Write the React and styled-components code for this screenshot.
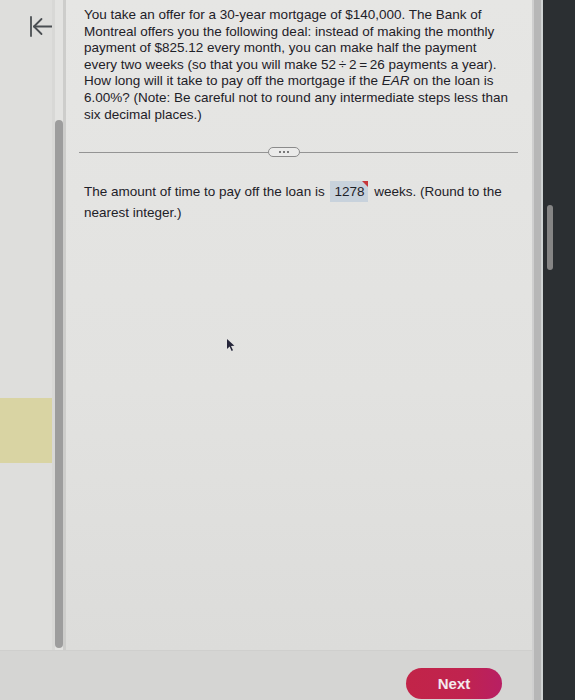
import React from 'react';
import styled, { createGlobalStyle } from 'styled-components';

const GlobalStyle = createGlobalStyle`
  html, body {
    margin: 0;
    padding: 0;
    background: #2c3033;
    overflow: hidden;
  }
`;

const BackIcon = () => (
  <svg width="26" height="22" viewBox="0 0 26 22" fill="none" stroke="#4a4e52" strokeWidth="1.8" strokeLinecap="round">
    <line x1="3" y1="1" x2="3" y2="20" />
    <line x1="6" y1="10.5" x2="25" y2="10.5" />
    <polyline points="13.5,3 6,10.5 13.5,18" strokeLinejoin="round" />
  </svg>
);

const Cursor = () => (
  <svg width="9" height="14" viewBox="0 0 9 14">
    <path d="M1 1 L1 11 L3.6 8.6 L5.6 13 L7 12.3 L5 8 L8.4 7.8 Z" fill="#25263a" />
  </svg>
);

const App = () => {
  return (
    <>
      <GlobalStyle />
      <Screen>
        <Window>
          <Body>
            <Sidebar>
              <BackButton>
                <BackIcon />
              </BackButton>
              <Highlight />
            </Sidebar>
            <Track>
              <Bar />
            </Track>
            <Content>
              <Question>
                You take an offer for a 30-year mortgage of $140,000. The Bank of<br />
                Montreal offers you the following deal: instead of making the monthly<br />
                payment of $825.12 every month, you can make half the payment<br />
                every two weeks (so that you will make 52{'\u2009'}÷{'\u2009'}2{'\u2009'}={'\u2009'}26 payments a year).<br />
                How long will it take to pay off the mortgage if the <em>EAR</em> on the loan is<br />
                6.00%? (Note: Be careful not to round any intermediate steps less than<br />
                six decimal places.)
              </Question>
              <Divider>
                <Rule $fixed />
                <Pill>
                  <Dot /><Dot /><Dot />
                </Pill>
                <Rule />
              </Divider>
              <Answer>
                The amount of time to pay off the loan is <Field>1278<Flag /></Field> weeks. (Round to the<br />
                nearest integer.)
              </Answer>
              <Pointer>
                <Cursor />
              </Pointer>
            </Content>
          </Body>
          <Footer>
            <NextButton>Next</NextButton>
          </Footer>
        </Window>
        <Edge />
        <Backdrop>
          <Thumb />
        </Backdrop>
      </Screen>
    </>
  );
};

const Screen = styled.div`
  display: flex;
  width: 575px;
  height: 700px;
  font-family: "Liberation Sans", Arial, sans-serif;
`;

const Window = styled.div`
  width: 532px;
  display: flex;
  flex-direction: column;
  background: #e3e3e1;
`;

const Body = styled.div`
  flex: 1;
  display: flex;
  min-height: 0;
`;

const Sidebar = styled.div`
  width: 52px;
  background: #dededc;
  display: flex;
  flex-direction: column;
`;

const BackButton = styled.div`
  padding: 16px 0 0 28px;
  height: 22px;
`;

const Highlight = styled.div`
  margin-top: 360px;
  height: 65px;
  background: #d9d4a3;
`;

const Track = styled.div`
  width: 14px;
  background: linear-gradient(90deg, #d8d8d6 0 3px, transparent 3px 11px, #cdcdcb 11px);
  padding: 120px 0 2px 3px;
  box-sizing: border-box;
`;

const Bar = styled.div`
  width: 8px;
  height: 528px;
  border-radius: 4px;
  background: #9d9d9d;
`;

const Content = styled.div`
  flex: 1;
  position: relative;
  padding: 7px 14px 0 13px;
  color: #1e2128;
  background: linear-gradient(180deg, #e6e6e4 0%, #e2e2e0 60%, #dcdcda 100%);
`;

const Question = styled.p`
  margin: 0 0 0 5px;
  font-size: 13.5px;
  line-height: 16.6px;
  white-space: nowrap;
`;

const Divider = styled.div`
  display: flex;
  align-items: center;
  margin-top: 24px;
  height: 10px;
`;

const Rule = styled.div`
  height: 1px;
  background: #949494;
  ${(p) => (p.$fixed ? 'width: 189px;' : 'flex: 1;')}
`;

const Pill = styled.div`
  width: 30px;
  height: 8px;
  border: 1px solid #8b8b8b;
  border-radius: 5px;
  background: #ebebea;
  display: flex;
  align-items: center;
  justify-content: center;
  gap: 2px;
`;

const Dot = styled.span`
  width: 2px;
  height: 2px;
  border-radius: 50%;
  background: #555;
`;

const Answer = styled.p`
  margin: 24px 0 0 5px;
  font-size: 13.5px;
  line-height: 20.5px;
  white-space: nowrap;
`;

const Field = styled.span`
  position: relative;
  display: inline-block;
  padding: 0 4px;
  height: 21px;
  line-height: 21px;
  background: #c8d2dc;
  margin: 0 2px;
`;

const Flag = styled.span`
  position: absolute;
  top: 0;
  right: 0;
  width: 0;
  height: 0;
  border-top: 6px solid #c6373b;
  border-left: 6px solid transparent;
`;

const Pointer = styled.div`
  position: absolute;
  left: 160px;
  top: 338px;
`;

const Footer = styled.div`
  height: 50px;
  background: #d5d5d3;
  border-top: 1px solid #cfcfcd;
  box-sizing: border-box;
  display: flex;
  justify-content: flex-end;
  padding: 17px 30px 0 0;
`;

const NextButton = styled.button`
  width: 96px;
  height: 31px;
  border: none;
  border-radius: 16px;
  background: linear-gradient(90deg, #c22448 0%, #c0234f 60%, #b81f63 100%);
  color: #f3e9ee;
  font-family: "Liberation Sans", Arial, sans-serif;
  font-weight: bold;
  font-size: 15px;
  cursor: pointer;
`;

const Edge = styled.div`
  width: 11px;
  background: linear-gradient(90deg, #cfcfcf 0 2px, #b7b7b7 2px 9px, #d0d4d4 9px);
`;

const Backdrop = styled.div`
  flex: 1;
  background: #2b2f32;
  padding: 205px 0 0 4px;
  box-sizing: border-box;
`;

const Thumb = styled.div`
  width: 6px;
  height: 65px;
  border-radius: 3px;
  background: #858585;
`;

export default App;
